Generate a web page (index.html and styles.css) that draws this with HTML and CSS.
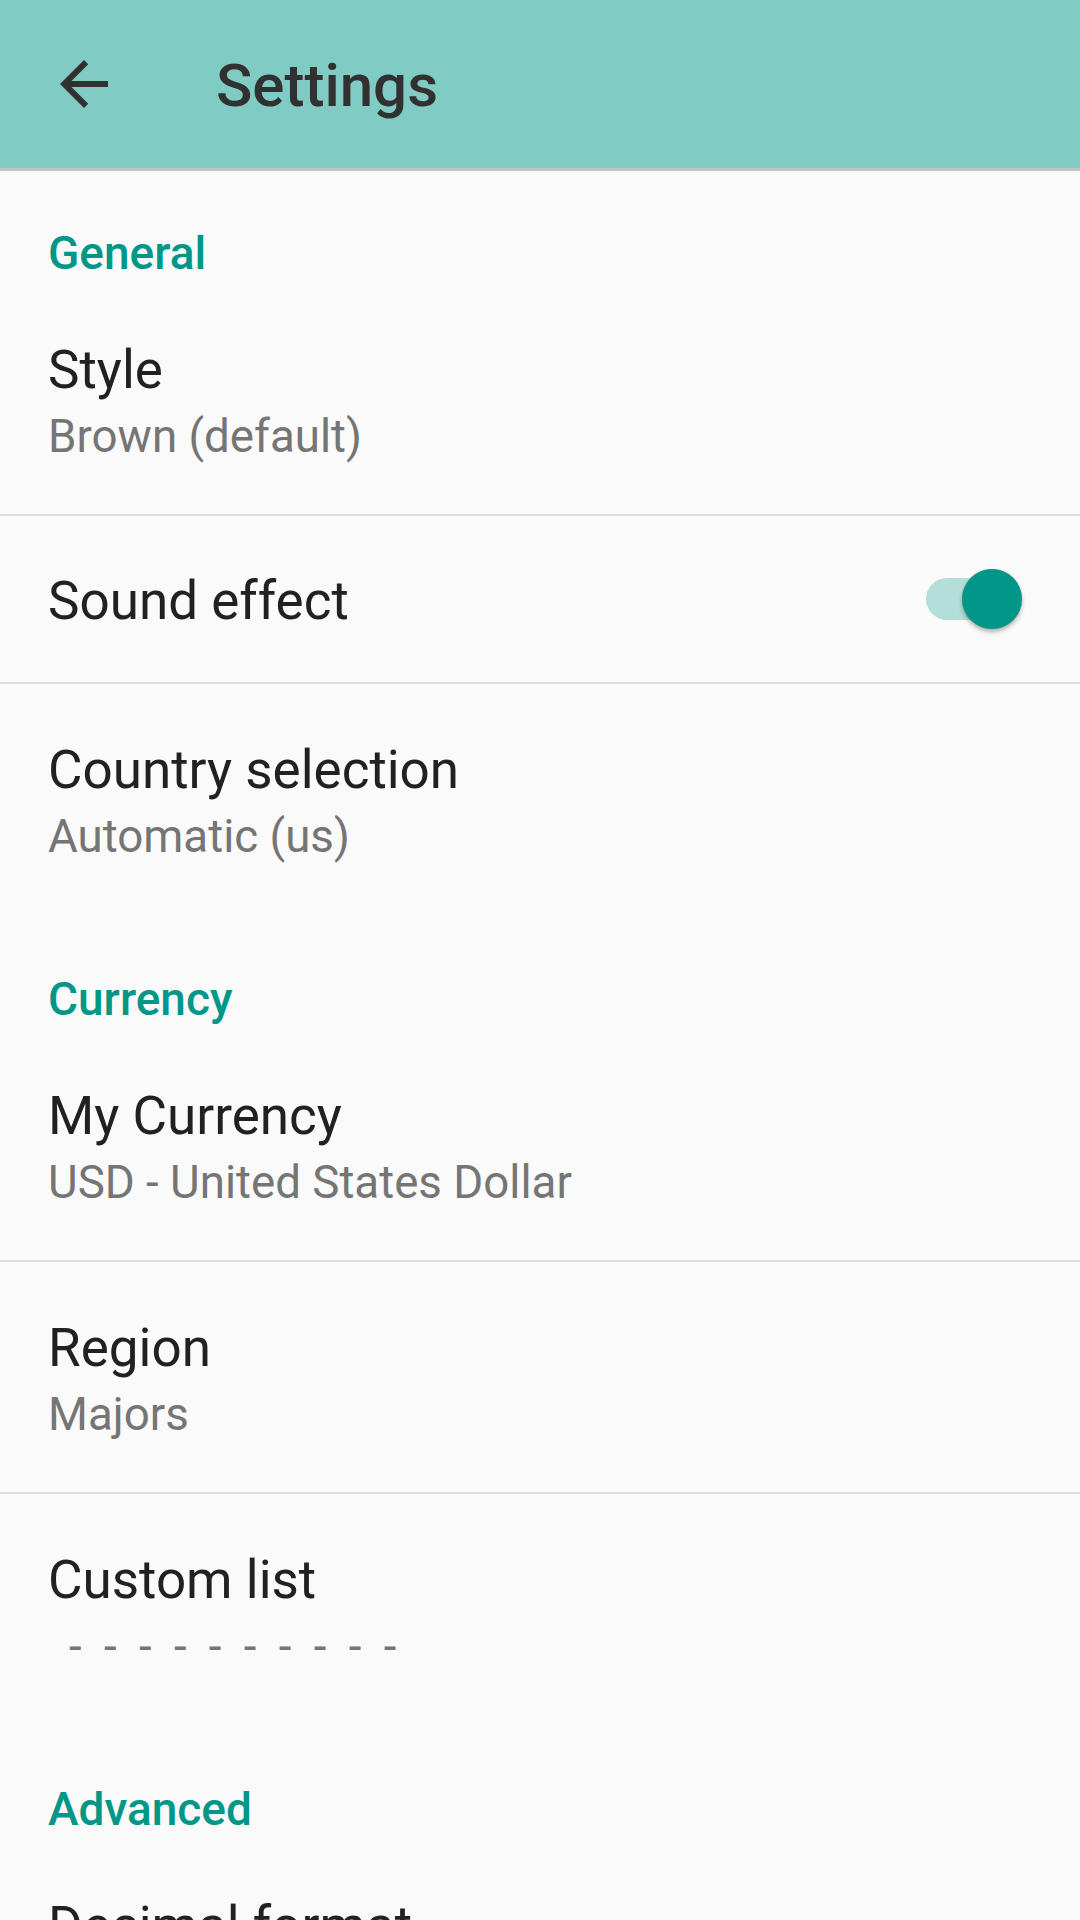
FILE: index.html
```html
<!DOCTYPE html>
<html lang="en">
<head>
  <meta charset="UTF-8">
  <meta name="viewport" content="width=device-width, initial-scale=1.0">
  <title>Settings</title>
  <link rel="stylesheet" href="styles.css">
</head>
<body>

<header class="toolbar">
  <button class="nav-back" aria-label="Back">
    <svg viewBox="0 0 24 24" width="72" height="72">
      <path d="M20 11H7.83l5.59-5.59L12 4l-8 8 8 8 1.41-1.41L7.83 13H20v-2z" fill="#313131"/>
    </svg>
  </button>
  <h1 class="toolbar-title">Settings</h1>
</header>

<main class="prefs">
  <div class="category">General</div>

  <div class="pref divided">
    <div class="pref-title">Style</div>
    <div class="pref-summary">Brown (default)</div>
  </div>

  <div class="pref pref-switch divided">
    <div class="pref-title">Sound effect</div>
    <div class="switch on">
      <span class="switch-track"></span>
      <span class="switch-thumb"></span>
    </div>
  </div>

  <div class="pref">
    <div class="pref-title">Country selection</div>
    <div class="pref-summary">Automatic (us)</div>
  </div>

  <div class="category">Currency</div>

  <div class="pref divided">
    <div class="pref-title">My Currency</div>
    <div class="pref-summary">USD - United States Dollar</div>
  </div>

  <div class="pref divided">
    <div class="pref-title">Region</div>
    <div class="pref-summary">Majors</div>
  </div>

  <div class="pref">
    <div class="pref-title">Custom list</div>
    <div class="pref-summary dashes">- - - - - - - - - -</div>
  </div>

  <div class="category">Advanced</div>

  <div class="pref">
    <div class="pref-title">Decimal format</div>
  </div>
</main>

</body>
</html>
```

FILE: styles.css
```css
body {
  margin: 0;
  padding: 0;
  background-color: #fafafa;
  font-family: Roboto, "Noto Sans", sans-serif;
  overflow: hidden;
}

/* top app bar */
.toolbar {
  position: relative;
  z-index: 1;
  height: 168px;
  display: flex;
  align-items: center;
  background-color: #80cbc4;
  box-shadow: 0 3px 0 #c2c2c2;
}
.nav-back {
  width: 72px;
  height: 72px;
  margin-left: 48px;
  padding: 0;
  border: none;
  background: none;
}
.nav-back svg {
  display: block;
}
.toolbar-title {
  margin: 4px 0 0 96px;
  font-size: 60px;
  font-weight: 500;
  line-height: 72px;
  color: #313131;
}

/* preference list */
.category {
  height: 116px;
  box-sizing: border-box;
  padding: 57px 48px 0;
  font-size: 46px;
  font-weight: 500;
  line-height: 56px;
  color: #009688;
}
.pref {
  padding: 54px 52px 42px 48px;
}
.pref.divided {
  border-bottom: 2px solid #dcdcdc;
}
.pref-title {
  font-size: 53px;
  line-height: 64px;
  color: #212121;
}
.pref-summary {
  font-size: 45.7px;
  line-height: 70px;
  color: #757575;
}
.dashes {
  padding-left: 21px;
  word-spacing: 11px;
}

/* switch row */
.pref-switch {
  height: 168px;
  box-sizing: border-box;
  padding-top: 0;
  padding-bottom: 0;
  display: flex;
  align-items: center;
  justify-content: space-between;
}
.pref-switch .pref-title {
  margin-top: 4px;
}
.switch {
  position: relative;
  width: 102px;
  height: 60px;
  display: flex;
  align-items: center;
}
.switch-track {
  width: 90px;
  height: 42px;
  border-radius: 21px;
  background-color: #b4deda;
}
.switch-thumb {
  position: absolute;
  top: 0;
  left: 36px;
  width: 60px;
  height: 60px;
  border-radius: 50%;
  background-color: #009688;
  box-shadow: 0 3px 4px rgba(0, 0, 0, 0.28), 0 0 1px rgba(0, 0, 0, 0.15);
}
```
